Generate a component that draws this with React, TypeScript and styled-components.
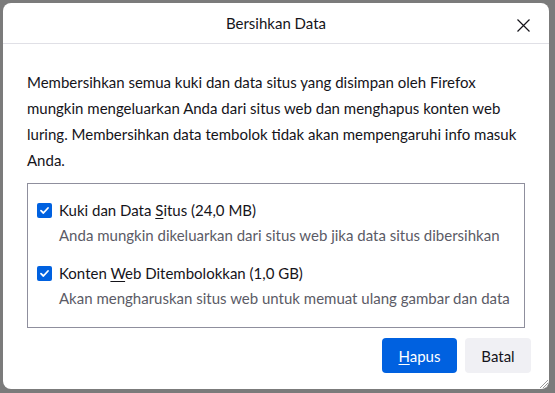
import React from "react";
import styled, { createGlobalStyle } from "styled-components";

const GlobalStyle = createGlobalStyle`
  html, body {
    margin: 0;
    padding: 0;
    background: #7b7b7b;
  }
  body {
    font-family: Lato, "Noto Sans", sans-serif;
    color: #15141a;
  }
`;

const Screen = styled.div`
  width: 555px;
  height: 393px;
  padding: 3px 6px 4px 3px;
  box-sizing: border-box;
  overflow: hidden;
`;

const Dialog = styled.div`
  position: relative;
  height: 100%;
  background: #ffffff;
  border-radius: 8px;
  display: flex;
  flex-direction: column;
`;

const Header = styled.div`
  height: 40px;
  border-bottom: 1px solid #e0e0e6;
  display: flex;
  align-items: center;
  justify-content: center;
  position: relative;
`;

const Title = styled.div`
  font-size: 15px;
  color: #15141a;
`;

const CloseButton = styled.button`
  position: absolute;
  right: 14px;
  top: 10px;
  width: 24px;
  height: 24px;
  border: 0;
  background: transparent;
  padding: 0;
  display: flex;
  align-items: center;
  justify-content: center;
`;

const Body = styled.div`
  padding: 25px 24px 0 24px;
  display: flex;
  flex-direction: column;
`;

const Intro = styled.p`
  margin: 0;
  font-size: 15px;
  line-height: 26px;
  color: #15141a;
`;

const OptionBox = styled.div`
  margin-top: 10px;
  border: 1px solid #8f8f9d;
  padding: 16px 9px 19px 9px;
  display: flex;
  flex-direction: column;
  gap: 18px;
`;

const Option = styled.div`
  display: grid;
  grid-template-columns: 15px 1fr;
  column-gap: 7px;
  row-gap: 5px;
`;

const Check = styled.span`
  width: 15px;
  height: 15px;
  margin-top: 3px;
  border-radius: 2px;
  background: #0061e0;
  display: flex;
  align-items: center;
  justify-content: center;
`;

const Label = styled.div`
  font-size: 15px;
  line-height: 20px;
  color: #15141a;
`;

const Hint = styled.div`
  grid-column: 2;
  font-size: 15px;
  line-height: 20px;
  color: #5b5b66;
`;

const Key = styled.span`
  text-decoration: underline;
  text-underline-offset: 2px;
`;

const Footer = styled.div`
  display: flex;
  justify-content: flex-end;
  gap: 8px;
  padding: 10px 18px 0 0;
`;

const Button = styled.button<{ $primary?: boolean }>`
  height: 35px;
  padding: 0 16px;
  border: 0;
  border-radius: 4px;
  font-family: inherit;
  font-size: 15px;
  background: ${(p) => (p.$primary ? "#0061e0" : "#f0f0f4")};
  color: ${(p) => (p.$primary ? "#ffffff" : "#15141a")};
  min-width: ${(p) => (p.$primary ? "75px" : "66px")};
`;

const Grip = styled.svg`
  position: absolute;
  right: 0;
  bottom: 0;
`;

const CheckMark = () => (
  <svg width="11" height="11" viewBox="0 0 11 11">
    <path d="M2 5.7 L4.4 8 L9 3" fill="none" stroke="#fff" strokeWidth="1.8" strokeLinecap="round" strokeLinejoin="round" />
  </svg>
);

export default function App() {
  return (
    <>
      <GlobalStyle />
      <Screen>
        <Dialog>
          <Header>
            <Title>Bersihkan Data</Title>
            <CloseButton aria-label="Tutup">
              <svg width="13" height="13" viewBox="0 0 13 13">
                <path d="M0.5 0.5 L12.5 12.5 M12.5 0.5 L0.5 12.5" stroke="#15141a" strokeWidth="1.2" />
              </svg>
            </CloseButton>
          </Header>
          <Body>
            <Intro>
              Membersihkan semua kuki dan data situs yang disimpan oleh Firefox mungkin mengeluarkan Anda dari situs
              web dan menghapus konten web luring. Membersihkan data tembolok tidak akan mempengaruhi info masuk Anda.
            </Intro>
            <OptionBox>
              <Option>
                <Check>
                  <CheckMark />
                </Check>
                <Label>
                  Kuki dan Data <Key>S</Key>itus (24,0 MB)
                </Label>
                <Hint>Anda mungkin dikeluarkan dari situs web jika data situs dibersihkan</Hint>
              </Option>
              <Option>
                <Check>
                  <CheckMark />
                </Check>
                <Label>
                  Konten <Key>W</Key>eb Ditembolokkan (1,0 GB)
                </Label>
                <Hint>Akan mengharuskan situs web untuk memuat ulang gambar dan data</Hint>
              </Option>
            </OptionBox>
          </Body>
          <Footer>
            <Button $primary>
              <Key>H</Key>apus
            </Button>
            <Button>Batal</Button>
          </Footer>
          <Grip width="12" height="12" viewBox="0 0 12 12">
            <path d="M11 3 L3 11 M11 6 L6 11 M11 9 L9 11" stroke="#9a9a9a" strokeWidth="1" />
          </Grip>
        </Dialog>
      </Screen>
    </>
  );
}
